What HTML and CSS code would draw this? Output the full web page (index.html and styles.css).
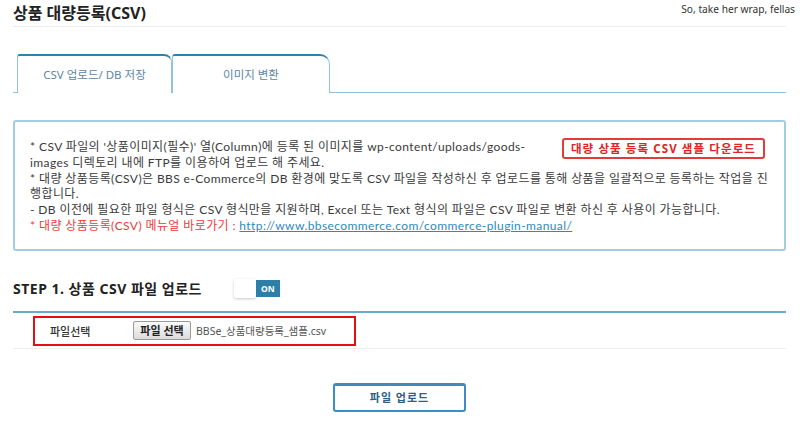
FILE: index.html
```html
<!DOCTYPE html>
<html lang="ko">
<head>
<meta charset="utf-8">
<link rel="stylesheet" href="styles.css">
</head>
<body>
<p class="dolly">So, take her wrap, fellas</p>
<div class="wrap">
  <h1 class="title">상품 대량등록(CSV)</h1>
  <div class="tabs">
    <div class="tab tab-first">CSV 업로드/ DB 저장</div>
    <div class="tab tab-second">이미지 변환</div>
  </div>
  <div class="info">
    <a class="sample-btn">대량 상품 등록 CSV 샘플 다운로드</a>
    <p>* CSV 파일의 '상품이미지(필수)' 열(Column)에 등록 된 이미지를 wp-content/uploads/goods-images 디렉토리 내에 FTP를 이용하여 업로드 해 주세요.</p>
    <p class="break-all">* 대량 상품등록(CSV)은 BBS e-Commerce의 DB 환경에 맞도록 CSV 파일을 작성하신 후 업로드를 통해 상품을 일괄적으로 등록하는 작업을 진행합니다.</p>
    <p>- DB 이전에 필요한 파일 형식은 CSV 형식만을 지원하며, Excel 또는 Text 형식의 파일은 CSV 파일로 변환 하신 후 사용이 가능합니다.</p>
    <p class="red">* 대량 상품등록(CSV) 메뉴얼 바로가기 : <a class="link">http://www.bbsecommerce.com/commerce-plugin-manual/</a></p>
  </div>
  <div class="step">
    <h2 class="step-title">STEP 1. 상품 CSV 파일 업로드</h2>
    <div class="toggle"><span class="knob"></span><span class="on">ON</span></div>
  </div>
  <div class="row">
    <div class="highlight">
      <span class="label">파일선택</span>
      <span class="file-btn">파일 선택</span>
      <span class="file-name">BBSe_상품대량등록_샘플.csv</span>
    </div>
  </div>
  <div class="actions">
    <span class="upload-btn">파일 업로드</span>
  </div>
</div>
</body>
</html>
```
FILE: styles.css
```css
html, body {
  margin: 0;
  padding: 0;
  background: #fff;
}
body {
  font-family: "Noto Sans", "Noto Sans CJK KR", sans-serif;
  color: #333;
  font-size: 11px;
}
.dolly {
  float: right;
  margin: 0;
  padding: 2px 5px 0 0;
  font-size: 10.2px;
  line-height: 14px;
  color: #333;
}
.wrap {
  margin: 0 14px 0 13px;
}
.title {
  margin: 0;
  font-size: 16px;
  font-weight: 700;
  line-height: 26px;
  color: #222;
  border-bottom: 1px solid #ececec;
}
.tabs {
  display: flex;
  margin-top: 27px;
  padding-left: 4px;
  border-bottom: 1px solid #8ec3da;
  height: 38px;
}
.tab {
  box-sizing: border-box;
  height: 39px;
  margin-bottom: -1px;
  background: #fff;
  border-top: 2px solid #2f82ab;
  border-left: 1px solid #8ec3da;
  border-right: 1px solid #8ec3da;
  text-align: center;
  line-height: 38px;
  font-size: 11.5px;
  color: #5a86a4;
}
.tab-first {
  width: 155px;
  border-radius: 3px 8px 0 0;
}
.tab-second {
  width: 158px;
  border-radius: 3px 10px 0 0;
}
.info {
  margin-top: 27px;
  border: 2px solid #a3cde0;
  border-radius: 3px;
  padding: 17px 15px 15px 15px;
  line-height: 15.8px;
  font-family: Lato, "Noto Sans CJK KR", sans-serif;
  font-size: 12px;
  letter-spacing: 0.4px;
  color: #3a3a3a;
}
.info p {
  margin: 0;
}
.info .break-all {
  word-break: break-all;
}
.sample-btn {
  float: right;
  box-sizing: border-box;
  width: 203px;
  height: 21px;
  margin: -1px 4px 0 20px;
  border: 2px solid #e23b3b;
  border-radius: 3px;
  text-align: center;
  line-height: 17px;
  font-family: "Noto Sans", "Noto Sans CJK KR", sans-serif;
  font-size: 11.5px;
  font-weight: 700;
  letter-spacing: 1.1px;
  color: #e02424;
}
.red {
  color: #ea3b3b;
}
.link {
  color: #2a8ac4;
  text-decoration: underline;
}
.step {
  display: flex;
  align-items: center;
  margin-top: 26px;
  height: 24px;
  padding-bottom: 10px;
  border-bottom: 2px solid #6aaac8;
}
.step-title {
  margin: 0;
  font-size: 14px;
  font-weight: 700;
  letter-spacing: 0.5px;
  color: #222;
  line-height: 24px;
}
.toggle {
  display: flex;
  align-items: center;
  margin-left: 32px;
}
.knob {
  width: 22px;
  height: 19px;
  background: #fff;
  border-radius: 2px;
  box-shadow: 0 1px 3px rgba(0, 0, 0, 0.22);
}
.on {
  width: 24px;
  height: 17px;
  background: #2d7fa8;
  color: #fff;
  font-size: 8.5px;
  font-weight: 700;
  line-height: 17px;
  text-align: center;
}
.row {
  padding: 3px 0 2px 20px;
  border-bottom: 1px solid #eeeeee;
}
.highlight {
  box-sizing: border-box;
  display: flex;
  align-items: center;
  width: 323px;
  height: 30px;
  border: 2px solid #e41010;
  padding-left: 15px;
}
.label {
  width: 83px;
  font-size: 11px;
  color: #333;
  font-weight: 500;
}
.file-btn {
  box-sizing: border-box;
  width: 58px;
  height: 19px;
  border: 1px solid #9a9a9a;
  border-radius: 2px;
  background: linear-gradient(#fafafa, #dcdcdc);
  text-align: center;
  line-height: 17px;
  font-size: 11px;
  font-weight: 700;
  color: #222;
}
.file-name {
  margin-left: 5px;
  font-size: 10.5px;
  color: #555;
}
.actions {
  display: flex;
  justify-content: center;
  margin-top: 34px;
}
.upload-btn {
  box-sizing: border-box;
  width: 133px;
  height: 29px;
  border: 2px solid #3d8ebf;
  border-top-width: 3px;
  border-radius: 3px;
  text-align: center;
  line-height: 23px;
  font-size: 11px;
  font-weight: 700;
  letter-spacing: 1px;
  color: #2b5f86;
}
```
